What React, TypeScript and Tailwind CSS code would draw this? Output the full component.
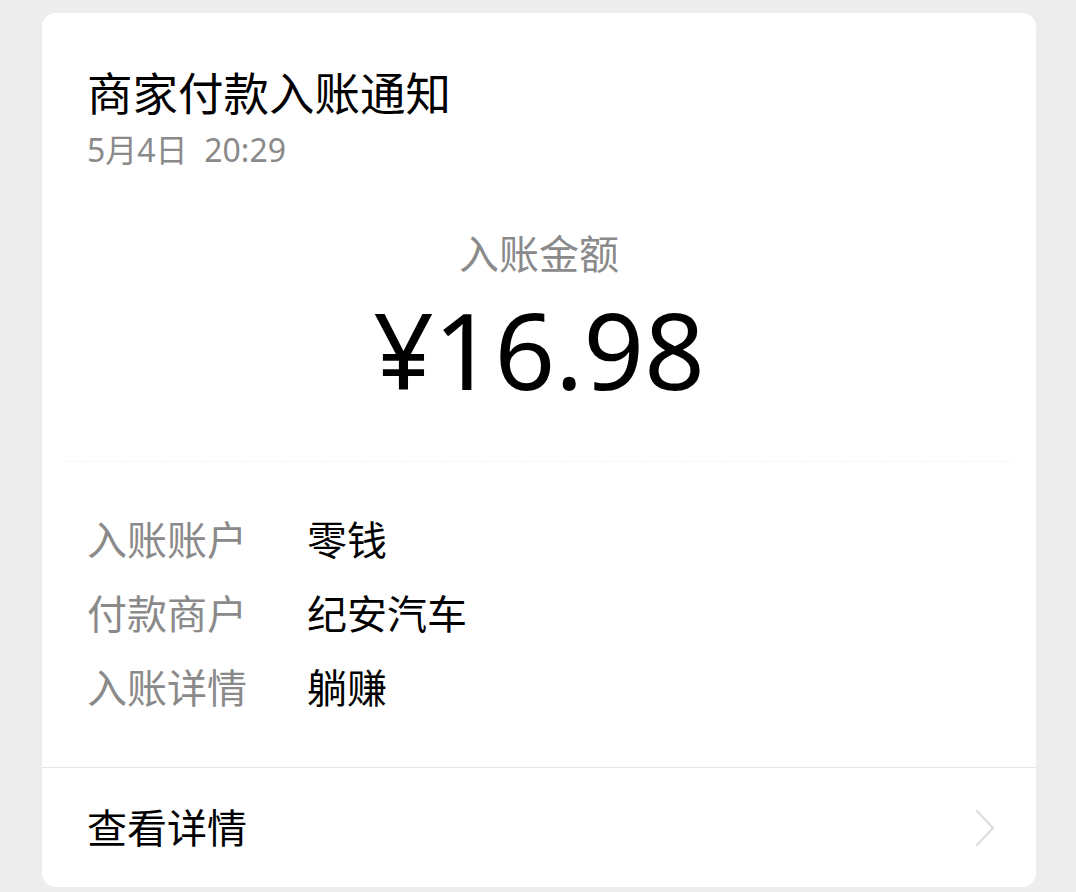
import React from "react"

const rows = [
  { label: "入账账户", value: "零钱" },
  { label: "付款商户", value: "纪安汽车" },
  { label: "入账详情", value: "躺赚" },
]

export default function App() {
  return (
    <div
      className="h-[892px] w-full bg-[#ededed] pt-[13px] pl-[42px] pr-[40px]"
      style={{ fontFamily: '"Noto Sans", "Noto Sans CJK SC", sans-serif' }}
    >
      <div className="h-[874px] w-[994px] rounded-[14px] bg-white flex flex-col overflow-hidden">
        <div className="pt-[52px] px-[45px]">
          <h1 className="text-[45.5px] leading-[56px] text-black">商家付款入账通知</h1>
          <p className="mt-[9px] text-[32px] leading-[40px] text-[#8a8a8a]">5月4日&nbsp;&nbsp;20:29</p>
        </div>

        <div className="mt-[60px] flex flex-col items-center">
          <p className="text-[40px] leading-[48px] text-[#8a8a8a]">入账金额</p>
          <p className="mt-[16px] text-[106px] leading-[110px] text-black">¥16.98</p>
        </div>

        <div className="mx-[23px] mt-[57px] border-t border-dashed border-[#f4f4f4]" />

        <div className="mt-[41px] px-[45px] flex flex-col">
          {rows.map((r) => (
            <div key={r.label} className="flex h-[74px] items-center text-[40px]">
              <span className="w-[220px] text-[#8a8a8a]">{r.label}</span>
              <span className="text-black">{r.value}</span>
            </div>
          ))}
        </div>

        <div className="mt-[42px] border-t border-[#e6e6e6]" />

        <div className="flex h-[120px] items-center justify-between pl-[45px] pr-[40px]">
          <span className="text-[40px] text-black">查看详情</span>
          <svg width="22" height="40" viewBox="0 0 22 40" fill="none">
            <polyline points="3,3 19,20 3,37" stroke="#dcdcdc" strokeWidth="2.2" strokeLinejoin="round" strokeLinecap="round" />
          </svg>
        </div>
      </div>
    </div>
  )
}
